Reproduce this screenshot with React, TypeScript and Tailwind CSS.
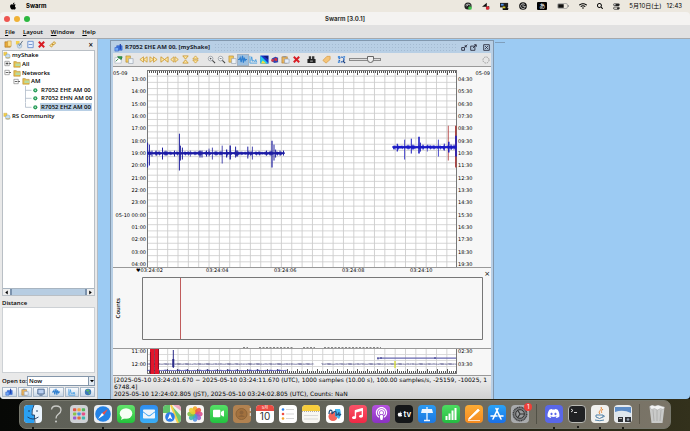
import React, { useState } from 'react';
import { FaApple, FaDiscord, FaPodcast, FaMusic, FaVideo, FaEnvelope, FaWifi, FaSearch } from 'react-icons/fa';

const uiFont = "font-['DejaVu_Sans',sans-serif]";
const swingFont = "font-['Open_Sans',sans-serif] font-semibold";
const macFont = "font-[Inter,'Noto_Sans_CJK_JP',sans-serif]";

const leftHours = ['13:00', '14:00', '15:00', '16:00', '17:00', '18:00', '19:00', '20:00', '21:00', '22:00', '23:00', '05-10 00:00', '01:00', '02:00', '03:00', '04:00'];
const rightHours = ['04:30', '05:30', '06:30', '07:30', '08:30', '09:30', '10:30', '11:30', '12:30', '13:30', '14:30', '15:30', '16:30', '17:30', '18:30', '19:30'];

// [x, top, bottom, width]
type Spike = [number, number, number, number];

const morningSpikes: Spike[] = [
  [0.6, 73, 98, 1], [2.4, 75, 96, 1], [5, 81, 87, 1], [9, 81, 86, 1], [15.5, 78, 90, 1], [27.5, 81, 87, 1],
  [32.4, 64, 101, 1], [33.4, 76, 91, 1], [35.4, 78, 90, 1], [43.4, 81, 87, 0.7], [53, 81, 88, 1], [55, 81, 88, 1],
  [59.5, 81, 87, 1], [62, 79, 87, 0.7], [65.4, 78, 90, 0.8], [75.2, 76, 94, 0.8], [79.6, 80, 88, 1.2],
  [83.2, 76, 90, 1.4], [88.6, 77, 88, 1], [90, 81, 87, 1.5], [100.8, 77, 89, 1], [105.4, 77, 90, 0.8],
  [119.5, 81, 86, 1], [125, 71, 98, 1.2], [127, 75, 91, 1], [128.6, 80, 88, 1], [133, 81, 86, 1], [136.5, 81, 86, 1]
];

const eveningSpikes: Spike[] = [
  [250.3, 74, 82, 1.2], [248, 76, 80, 1], [257.6, 70, 90, 0.8], [264.3, 69, 84, 1], [272, 67, 84, 1.6],
  [273.4, 73, 82, 1], [276, 75, 80, 1], [280.3, 75, 82, 0.7], [291.4, 70, 87, 0.8], [297.3, 74, 81, 1],
  [301.8, 72, 83, 1.5], [304, 75, 80, 1.2], [307, 75, 80, 1], [309, 66, 87, 1.6]
];

const columns = Array.from({ length: 29 }, (_, i) => (i + 1) * 10.34);

// thin jittery base line of a trace
const noise = (from: number, to: number, y: number, amp: number) => {
  let d = `M${from} ${y}`;
  for (let x = from; x <= to; x += 1) {
    const a = (0.4 + Math.abs(Math.sin(x * 2.7) * Math.cos(x * 0.31))) * amp;
    d += `L${x} ${y - a}L${x + 0.5} ${y + a}`;
  }
  return d;
};

function Ticks({ y, up }: { y: number; up?: boolean }) {
  const s = up ? -1 : 1;
  return (
    <>
      {Array.from({ length: 155 }, (_, i) => (
        <path key={i} d={`M${i * 2 + 0.5} ${y}v${(i % 5 === 0 ? 5 : 3) * s}`} stroke="#555" strokeWidth={1} />
      ))}
    </>
  );
}

function Helicorder() {
  return (
    <svg className="block h-full w-full bg-white" viewBox="0 0 310 198" preserveAspectRatio="none">
      {columns.map((x) => <path key={x} d={`M${x} 0V198`} stroke="#c6c6c6" strokeWidth={0.8} />)}
      {Array.from({ length: 32 }, (_, i) => (
        <path key={i} d={`M0 ${6.2 + i * 6.22}H310`} stroke="#cccccc" strokeWidth={0.8} />
      ))}
      <Ticks y={0} />
      <path d="M0 0.5H310M0.5 0V198M309.5 0V198" stroke="#777" fill="none" />
      <path d="M301.3 56V91" stroke="#b94a4a" strokeWidth={0.9} />
      <path d="M308.8 56V98" stroke="#a83232" strokeWidth={1.4} />
      <path d={noise(0, 137, 83.7, 0.8)} stroke="#1a1aa6" strokeWidth={1.1} fill="none" />
      <path d="M0 83.600H137.500" stroke="#1a1aa6" strokeWidth={1.3} />
      <path d={noise(246, 309, 77.6, 0.9)} stroke="#1a1ac8" strokeWidth={1.1} fill="none" />
      <path d="M245.500 77.600H309" stroke="#1a1ac8" strokeWidth={1.3} />
      {morningSpikes.map(([x, a, b, w]) => <path key={x} d={`M${x} ${a}V${b}`} stroke="#2020a0" strokeWidth={w} />)}
      {eveningSpikes.map(([x, a, b, w]) => <path key={x} d={`M${x} ${a}V${b}`} stroke="#1c1cc0" strokeWidth={w} />)}
    </svg>
  );
}

function TailStrip() {
  return (
    <svg className="block h-full w-full bg-white" viewBox="0 0 310 25" preserveAspectRatio="none">
      {columns.map((x) => <path key={x} d={`M${x} 0V25`} stroke="#c9c9c9" strokeWidth={0.8} />)}
      <path d="M0 5.5H310M0 11.5H310M0 17.5H310" stroke="#d2d2d2" strokeWidth={0.8} />
      <Ticks y={25} up />
      <path d="M0 24.5H310M0.5 0V25M309.5 0V25" stroke="#777" />
      <path d={noise(0, 166, 15, 0.4)} stroke="#44447c" strokeWidth={0.7} fill="none" />
      <path d={noise(175, 309, 15, 0.4)} stroke="#44447c" strokeWidth={0.7} fill="none" />
      <path d={noise(0, 139, 21.3, 0.4)} stroke="#3c3caa" strokeWidth={0.8} fill="none" />
      <path d="M230 9.2H309" stroke="#6868b0" strokeWidth={1.2} />
      <path d="M231 8.5v2M234 8v2M288 8v2" stroke="#333388" />
      <path d="M26.3 1V19" stroke="#2a2a88" />
      <path d="M26.3 10V18" stroke="#2a2a88" strokeWidth={2} />
      <path d="M3 0H7V25H3zM8 0H12V25H8z" fill="#e3142a" />
      <path d="M7.5 0V25M3.4 3V25M11.5 0V20" stroke="#701028" strokeWidth={0.8} />
      <path d="M248 12v7" stroke="#d8e020" strokeWidth={1.2} />
    </svg>
  );
}

const glyphs: Record<string, React.ReactNode> = {
  open: <><path d="M1 2h5l1 1v5H1z" fill="#e8a93a" stroke="#a5701c" strokeWidth=".6" /><path d="M4 1h4v6H4z" fill="#ffe08a" stroke="#b8862a" strokeWidth=".5" /></>,
  edit: <><path d="M1 1h4v4H1z" fill="#f3cf4c" /><circle cx="5" cy="6.5" r="2.6" fill="#c5d8ec" stroke="#7d9ab8" strokeWidth=".5" /><path d="M4 5l1 1 3.5-5" stroke="#34495e" strokeWidth=".8" fill="none" /></>,
  collapse: <path d="M2 1.5h6v7H2zM3 5h4" fill="#e7f0ff" stroke="#5b86c9" strokeWidth=".9" />,
  remove: <path d="M2 2l6 6M8 2L2 8" stroke="#d81c24" strokeWidth="2.2" />,
  link: <path d="M2.2 6.2l2-2 1.6 1.6-2 2zM4.8 3.8l2-2 1.6 1.6-2 2z" fill="#fbe6a0" stroke="#c18c22" strokeWidth="1" />,
  pin: <><path d="M1 3h7v6H1z" fill="#fff" stroke="#9aaabc" strokeWidth=".6" /><path d="M2 7l3-3M4 2l4 3 1-3z" stroke="#237a3b" strokeWidth="1" fill="#36a853" /></>,
  clip: <><path d="M1 1h5v7H1z" fill="#f1c75b" stroke="#a9822a" strokeWidth=".6" /><path d="M4 4h5v5.5H4z" fill="#eef3f8" stroke="#8895a5" strokeWidth=".6" /></>,
  back: <path d="M5 2v6L1 5zM9 2v6L5 5z" fill="#ffe9a8" stroke="#c8952b" strokeWidth=".8" />,
  forward: <path d="M1 2v6l4-3zM5 2v6l4-3z" fill="#ffe9a8" stroke="#c8952b" strokeWidth=".8" />,
  narrow: <path d="M1 2v6l4-3zM9 2v6L5 5z" fill="#ffe9a8" stroke="#c8952b" strokeWidth=".9" />,
  widen: <path d="M4.4 2v6L.8 5zM5.6 2v6l3.6-3z" fill="#ffe9a8" stroke="#c8952b" strokeWidth=".8" />,
  squash: <path d="M2 1h6L5 4.6zM2 9h6L5 5.4z" fill="#ffe9a8" stroke="#c8952b" strokeWidth=".9" />,
  stretch: <path d="M2 4.4h6L5 1zM2 5.6h6L5 9z" fill="#ffe9a8" stroke="#c8952b" strokeWidth=".8" />,
  zoomIn: <><circle cx="4" cy="4" r="2.6" fill="#f4f7fa" stroke="#8a8f96" strokeWidth=".8" /><path d="M6 6l3 3" stroke="#444" strokeWidth="1.2" /><path d="M3 4h2M4 3v2" stroke="#333" strokeWidth=".7" /></>,
  zoomOut: <><circle cx="4" cy="4" r="2.6" fill="#f4f7fa" stroke="#8a8f96" strokeWidth=".8" /><path d="M6 6l3 3" stroke="#444" strokeWidth="1.2" /><path d="M3 4h2" stroke="#333" strokeWidth=".7" /></>,
  wave: <path d="M0 5h1.5L2.5 3l1 5L5 1l1 7.500L7 3l1 3 .6-1H10" fill="none" stroke="#2f7fd0" strokeWidth="1.3" />,
  spectra: <path d="M1 1v8h8M2 7l1-5 1 5 1.500-1 1 1.500L7.500 5l1 3" fill="none" stroke="#3897e0" strokeWidth=".9" />,
  spectrogram: <><path d="M.5.5h9v9h-9z" fill="#1733c8" /><path d="M.5.5l9 9h-9z" fill="#25c7e8" /><path d="M3 6l4 3.500H1z" fill="#f4e33b" /><path d="M4 1h5v4z" fill="#101a78" /></>,
  particle: <><path d="M2 4l4-2 3 1v5L5 9 2 7z" fill="#3046b0" /><path d="M5 3l3 1v3l-3-1z" fill="#d8303c" /><circle cx="2.800" cy="6" r="1.500" fill="#d23a48" /></>,
  paste: <><path d="M1 2h6v7H1z" fill="#e9b45e" stroke="#a3712c" strokeWidth=".6" /><path d="M2.500 1h3v1.600h-3z" fill="#8d97a5" /><path d="M4 4.500h5V9H4z" fill="#e8effa" stroke="#7c8fae" strokeWidth=".6" /></>,
  camera: <><path d="M.500 4.500h9v4.500h-9z" fill="#222" /><path d="M2 1.500h2.600v3H2zM5.600 1.500h2.600v3H5.600z" fill="#333" /><path d="M3.500 6h3v1.500h-3z" fill="#999" /></>,
  tag: <path d="M1 6l4.500-4.500L9 1.500v3.500L4.500 9z" fill="#f5c478" stroke="#dba14d" strokeWidth=".9" />,
  gears: <><circle cx="5" cy="5" r="2.700" fill="none" stroke="#2762ba" strokeWidth="1.500" strokeDasharray="2 1" /><path d="M1 1h2.500v2.500H1zM7 1h2v2H7zM1 7h2v2H1z" fill="#4c90da" /><path d="M6.500 6.500l2.500 2.500" stroke="#1d3e78" strokeWidth="1.400" /></>,
  swarm: <><path d="M3 3h6v5H3z" fill="#3b77e0" stroke="#2a55c0" strokeWidth=".6" /><path d="M1 5h4v4H1z" fill="#72aaf8" stroke="#2a55c0" strokeWidth=".6" /><path d="M7 1v6" stroke="#1d3da8" strokeWidth="1.300" /></>,
  monitor: <><path d="M1 1.500h8v6H1z" fill="#b9cff0" stroke="#33507c" strokeWidth="1" /><path d="M3 9h4" stroke="#33507c" /></>,
  globe: <><circle cx="5" cy="5" r="4" fill="#3f78b8" /><path d="M2 3l3-1.500 2 1.500-2 2zM5 6l3-1-1 3z" fill="#57b768" /></>,
  server: <><path d="M1 1.500h4v4H1z" fill="#f3cf4c" stroke="#b9952a" strokeWidth=".4" /><circle cx="6" cy="6.500" r="2.800" fill="#c8dff2" stroke="#6e96bd" strokeWidth=".6" /><path d="M3 8.500h6" stroke="#d3a52d" strokeWidth=".8" /></>,
  folder: <><path d="M1 2h3l1 1h4v6H1z" fill="#e8bf4d" stroke="#a98023" strokeWidth=".6" /><path d="M3 4.500h6v3H3z" fill="#b9dba0" /></>,
  iconify: <path d="M1 5h4v4H1zM9 1L6 4M6 1.500V4h2.500" fill="none" stroke="#223" strokeWidth="1.200" />,
  maximize: <path d="M1 3h6v6H1zM4 6l4.500-4.500M6 1h3v3" fill="none" stroke="#223" strokeWidth="1.200" />,
  close: <path d="M1 1h8v8H1zM3 3l4 4M7 3L3 7" fill="none" stroke="#223" strokeWidth="1.200" />
};

function Glyph({ name, size = 'size-[8px]' }: { name: string; size?: string }) {
  return <svg viewBox="0 0 10 10" className={`block shrink-0 ${size}`}>{glyphs[name]}</svg>;
}

function ToolButton({ name, active }: { name: string; active?: boolean }) {
  return (
    <button aria-label={name} className={`flex h-[10px] w-[10px] items-center justify-center ${active ? 'bg-[#9bbfe0] outline outline-[#a3b2c2]' : ''}`}>
      <Glyph name={name} size="size-[9px]" />
    </button>
  );
}

function MenuBar() {
  return (
    <header className={`flex h-[12px] shrink-0 items-center bg-[#ece8df] text-[6px] leading-[8px] text-black ${macFont}`}>
      <FaApple className="ml-[9px] size-[8px]" />
      <span className="ml-[9px] font-bold">Swarm</span>
      <div className="ml-auto flex items-center gap-[10px]">
        <svg viewBox="0 0 10 10" className="size-[8px]"><circle cx="5" cy="5" r="4.500" fill="#222" /><path d="M2 4q3-3 6 0M3 5l2-1" stroke="#ddd" fill="none" /><circle cx="7.500" cy="7.500" r="2.300" fill="#3fc34c" /></svg>
        <svg viewBox="0 0 10 10" className="size-[8px]"><path d="M0 6l6-5v5l3-1v4H5V6z" fill="#111" /><circle cx="7" cy="7.500" r="2.200" fill="#e02c38" /></svg>
        <svg viewBox="0 0 10 10" className="size-[9px]"><path d="M0 1h9v5H0z" fill="#222" /><path d="M1 2h3v2H1z" fill="#4c8de8" /><path d="M3 9V6l3-2 3 3v2z" fill="#111" /><path d="M3 5h3v2H3z" fill="#d8c930" /></svg>
        <svg viewBox="0 0 10 10" className="size-[8px]"><circle cx="5" cy="5" r="4.800" fill="#111" /><path d="M7.500 3.500A3 3 0 1 0 8 5.500H5.500M5 3v3" stroke="#eee" strokeWidth=".9" fill="none" /></svg>
        <span className="flex h-[8px] w-[10px] items-center justify-center rounded-[1px] bg-black text-[6px] text-white">あ</span>
        <svg viewBox="0 0 12 8" className="h-[8px] w-[12px]"><rect x=".5" y="1.500" width="10" height="5" rx="1.500" fill="none" stroke="#999" strokeWidth=".7" /><path d="M1.200 2.200h5.500v3.600H1.200z" fill="#111" /><path d="M11.400 3v2" stroke="#999" /></svg>
        <FaWifi className="size-[8px]" />
        <FaSearch className="size-[6px]" />
        <svg viewBox="0 0 10 10" className="size-[7px]"><rect x=".5" y=".8" width="9" height="3.600" rx="1.800" fill="#222" /><rect x=".8" y="5.800" width="8.400" height="3.200" rx="1.600" fill="none" stroke="#222" /><circle cx="2.700" cy="2.600" r="1.100" fill="#fff" /><circle cx="7.200" cy="7.400" r="1.500" fill="#222" /></svg>
      </div>
      <span className="ml-[9px] mr-[8px] flex gap-[5px]"><span>5月10日(土)</span><span>12:43</span></span>
    </header>
  );
}

function WindowHead() {
  return (
    <>
      <div className={`relative flex h-[13px] shrink-0 items-center justify-center rounded-t-[4px] bg-[#f4f3f1] ${macFont}`}>
        <div className="absolute left-[4px] flex gap-[4px]">
          <button aria-label="Close" className="size-[6px] rounded-full bg-[#ee5550]" />
          <button aria-label="Minimize" className="size-[6px] rounded-full bg-[#f0b236]" />
          <button aria-label="Zoom" className="size-[6px] rounded-full bg-[#2cb840]" />
        </div>
        <h1 className="text-[6px] font-bold leading-[8px] text-[#333]">Swarm [3.0.1]</h1>
      </div>
      <nav className={`flex h-[14px] shrink-0 items-center gap-[8px] border-b border-[#a5a9ad] bg-[#e1e1e1] px-[5px] text-[6px] leading-[8px] text-black ${swingFont}`}>
        {['File', 'Layout', 'Window', 'Help'].map((m) => (
          <button key={m}><span className="underline">{m[0]}</span>{m.slice(1)}</button>
        ))}
      </nav>
    </>
  );
}

function Branch({ open }: { open?: boolean }) {
  return (
    <svg viewBox="0 0 8 8" className="size-[7px] shrink-0">
      <path d="M1 1.500h5v5H1z" fill="#fff" stroke="#888" strokeWidth=".8" />
      <path d={open ? 'M2 4h3M6 4h2' : 'M2 4h3M3.500 2.500v3M6 4h2'} stroke="#222" strokeWidth=".8" />
    </svg>
  );
}

function Channel({ label, selected }: { label: string; selected?: boolean }) {
  return (
    <li className="flex items-center pl-[22px]">
      <svg viewBox="0 0 16 9" className="h-full w-[15px] shrink-0" preserveAspectRatio="none">
        <path d={selected ? 'M.500 0V4.500H7' : 'M.500 0V9M.500 4.500H7'} stroke="#a8b4c4" strokeWidth=".8" fill="none" />
        <circle cx="11" cy="4.500" r="2.200" fill="#2c9c5c" /><circle cx="11" cy="4.500" r=".8" fill="#bff0cf" />
      </svg>
      <button className={`whitespace-nowrap px-[1px] leading-[8px] ${selected ? 'bg-[#b8cfe5]' : ''}`}>{label}</button>
    </li>
  );
}

function Sidebar() {
  const [openTo, setOpenTo] = useState('Now');
  return (
    <aside className={`flex w-[98px] shrink-0 flex-col border-r border-[#b4bcc4] bg-[#e9e9e9] px-[2px] text-[6px] leading-[8px] text-black ${swingFont}`}>
      <div className="flex h-[11px] items-center gap-[1px] pl-px">
        <ToolButton name="open" /><ToolButton name="edit" /><ToolButton name="collapse" /><ToolButton name="remove" /><ToolButton name="link" />
        <button aria-label="Hide chooser" className="ml-auto mr-[2px] text-[8px]">×</button>
      </div>
      <div className="flex flex-1 flex-col border border-[#b9bfc5] bg-white">
        <ul className="grid h-[69px] grid-rows-8">
          <li className="flex items-center"><Glyph name="server" /><span className="ml-[1px]">myShake</span></li>
          <li className="flex items-center pl-[1px]"><Branch /><Glyph name="folder" size="ml-[2px] size-[8px]" /><span className="ml-[1px]">All</span></li>
          <li className="flex items-center pl-[1px]"><Branch open /><Glyph name="folder" size="ml-[2px] size-[8px]" /><span className="ml-[1px]">Networks</span></li>
          <li className="flex items-center pl-[10px]"><Branch open /><Glyph name="folder" size="ml-[2px] size-[8px]" /><span className="ml-[1px]">AM</span></li>
          <Channel label="R7052 EHE AM 00" />
          <Channel label="R7052 EHN AM 00" />
          <Channel label="R7052 EHZ AM 00" selected />
          <li className="flex items-center"><Glyph name="server" /><span className="ml-[1px]">RS Community</span></li>
        </ul>
        <div className="mt-auto flex h-[7px] items-stretch border-t border-[#a8b4c0] bg-[#eee]">
          <button aria-label="Scroll left" className="w-[7px]"><svg viewBox="0 0 6 6" className="mx-auto size-[5px]"><path d="M4.500.500v5L1.500 3z" /></svg></button>
          <div className="flex-1 border-x-2 border-[#7c93ad] bg-[#b7cde2]" />
          <button aria-label="Scroll right" className="w-[7px]"><svg viewBox="0 0 6 6" className="mx-auto size-[5px]"><path d="M1.500.500v5l3-2.500z" /></svg></button>
        </div>
      </div>
      <h2 className="mt-[3px] h-[8px]">Distance</h2>
      <div className="h-[66px] border border-[#cdd1d5] bg-white" />
      <div className="mt-[3px] flex h-[10px] items-center">
        <label htmlFor="openTo" className="w-[25px] shrink-0 whitespace-nowrap">Open to:</label>
        <div className="relative h-full flex-1">
          <select id="openTo" value={openTo} onChange={(e) => setOpenTo(e.target.value)} className="block h-full w-full appearance-none border border-[#8496aa] bg-white px-[1px] text-[6px] font-semibold leading-[8px]">
            <option>Now</option>
          </select>
          <span className="pointer-events-none absolute inset-y-0 right-0 flex w-[7px] items-center justify-center border border-[#8496aa] bg-[#e4ebf2]">
            <svg viewBox="0 0 6 6" className="size-[4px]"><path d="M0 1.500h6L3 5z" /></svg>
          </span>
        </div>
      </div>
      <div className="mb-[2px] mt-[1px] flex h-[10px] gap-[1px]">
        {['swarm', 'paste', 'monitor', 'wave', 'spectra', 'globe'].map((n) => (
          <button key={n} aria-label={n} className="flex flex-1 items-center justify-center border border-[#a9b8c8] bg-linear-to-b from-[#fafcfe] to-[#c9d8e7]"><Glyph name={n} /></button>
        ))}
      </div>
    </aside>
  );
}

function WaveFrame() {
  const [zoom, setZoom] = useState(75);
  return (
    <section className="flex w-[382px] shrink-0 flex-col border-x-2 border-[#b8cfe5] bg-[#e8e8e8] text-black outline outline-[#8298ae]">
      <div className="flex h-[12px] items-center bg-[#b8cfe5] px-[1px]">
        <Glyph name="swarm" size="size-[9px]" />
        <h2 className="ml-[2px] whitespace-nowrap font-['Open_Sans',sans-serif] text-[6px] font-bold leading-[8px] text-[#1c2530]">R7052 EHE AM 00, [myShake]</h2>
        <div className="ml-[4px] h-[8px] flex-1 bg-[radial-gradient(#a4bbd2_1px,transparent_1px)] bg-[size:3px_3px]" />
        <div className="ml-[3px] flex gap-[2px]">
          <button aria-label="Iconify"><Glyph name="iconify" size="size-[7px]" /></button>
          <button aria-label="Maximize"><Glyph name="maximize" size="size-[7px]" /></button>
          <button aria-label="Close frame" className="ml-[4px]"><Glyph name="close" size="size-[7px]" /></button>
        </div>
      </div>
      <div className="flex h-[13px] items-center bg-[#e6e6e6]">
        <div className="flex gap-[1px]"><ToolButton name="pin" /><ToolButton name="clip" /></div>
        <div className="ml-[4px] flex w-[63px] justify-between">
          <ToolButton name="back" /><ToolButton name="forward" /><ToolButton name="narrow" /><ToolButton name="widen" /><ToolButton name="squash" /><ToolButton name="stretch" />
        </div>
        <div className="ml-[5px] flex w-[95px] justify-between">
          <ToolButton name="zoomIn" /><ToolButton name="zoomOut" /><ToolButton name="clip" /><ToolButton name="wave" active /><ToolButton name="spectra" /><ToolButton name="spectrogram" /><ToolButton name="particle" /><ToolButton name="paste" /><ToolButton name="remove" />
        </div>
        <div className="ml-[5px] flex gap-[5px]"><ToolButton name="camera" /><ToolButton name="tag" /><ToolButton name="gears" /></div>
        <input
          type="range"
          aria-label="Picker scale"
          value={zoom}
          onChange={(e) => setZoom(Number(e.target.value))}
          className="ml-[3px] h-[8px] w-[32px] appearance-none bg-transparent [&::-webkit-slider-runnable-track]:h-[3px] [&::-webkit-slider-runnable-track]:border [&::-webkit-slider-runnable-track]:border-[#8a8a8a] [&::-webkit-slider-runnable-track]:bg-[#ddd] [&::-webkit-slider-thumb]:-mt-[3px] [&::-webkit-slider-thumb]:size-[7px] [&::-webkit-slider-thumb]:appearance-none [&::-webkit-slider-thumb]:rounded-b-full [&::-webkit-slider-thumb]:border [&::-webkit-slider-thumb]:border-[#666] [&::-webkit-slider-thumb]:bg-[#eee]"
        />
        <svg viewBox="0 0 10 10" className="ml-auto mr-[1px] size-[8px]"><circle cx="5" cy="5" r="3.800" fill="none" stroke="#999" strokeWidth="1.200" strokeDasharray="1.800 1.200" /></svg>
      </div>

      <div className="flex min-h-0 flex-1 border-t border-[#999] bg-[#f7f7f7] pt-[3px] text-[5px] leading-[6px]">
        <div className="flex w-[34px] shrink-0 flex-col">
          <span className="h-[6px]">05-09</span>
          <ol className="flex flex-1 flex-col justify-between text-right">
            {leftHours.map((h) => <li key={h} className="whitespace-nowrap pr-[1px]">{h}</li>)}
          </ol>
        </div>
        <div className="relative min-w-0 flex-1"><div className="absolute inset-0"><Helicorder /></div></div>
        <div className="flex w-[34px] shrink-0 flex-col">
          <span className="h-[6px] pr-[1px] text-right">05-09</span>
          <ol className="flex flex-1 flex-col justify-between pl-[1px]">
            {rightHours.map((h) => <li key={h}>{h}</li>)}
          </ol>
        </div>
      </div>

      <div className="flex h-[82px] shrink-0 flex-col border-y border-[#999] bg-[#f7f7f7]">
        <div className="flex h-[9px] text-[5px] leading-[6px]">
          <div className="-mt-px flex flex-1 items-start pl-[23px]">
            {['♥03:24:02', '03:24:04', '03:24:06', '03:24:08', '03:24:10'].map((t) => <span key={t} className="w-[68px] first:w-[70px]">{t}</span>)}
          </div>
          <button aria-label="Close wave" className="mr-[1px] mt-[2px] text-[7px] leading-[6px]">×</button>
        </div>
        <div className="flex h-[63px]">
          <span className="flex w-[29px] items-center pl-[1px] text-[6px] leading-[8px]"><span className={`rotate-180 [writing-mode:vertical-rl] ${swingFont}`}>Counts</span></span>
          <svg className="h-full min-w-0 flex-1" viewBox="0 0 341 63" preserveAspectRatio="none">
            <path d="M.500 .500H340.500V62.500H.500z" fill="#f7f7f7" stroke="#777" />
            <path d="M38.500 1V62" stroke="#c05c5c" />
          </svg>
          <span className="w-[8px]" />
        </div>
        <svg className="ml-[130px] mt-auto block h-[1px] w-[140px]" viewBox="0 0 140 1">
          <path d="M0 .500H5M16 .500H50M60 .500H72M81 .500H138" stroke="#888" strokeDasharray="2 1.500" />
        </svg>
      </div>

      <div className="flex h-[27px] shrink-0 border-b border-[#999] bg-[#f7f7f7] pb-[1px] text-[5px] leading-[6px]">
        <div className="w-[34px] pr-[1px] text-right"><p className="-mt-px h-[13px]">11:00</p><p>12:00</p></div>
        <div className="min-w-0 flex-1"><TailStrip /></div>
        <div className="w-[34px] pl-[1px]"><p className="-mt-px h-[13px]">02:30</p><p>03:30</p></div>
      </div>
      <div className="h-[23px] shrink-0 bg-linear-to-b from-[#efefef] to-[#d0d0d0] pl-[1px] text-[6px] leading-[7px]">
        <p>[2025-05-10 03:24:01.670 − 2025-05-10 03:24:11.670 (UTC), 1000 samples (10.00 s), 100.00 samples/s, -25159, -10025, 1</p>
        <p>6748.4]</p>
        <p>2025-05-10 12:24:02.805 (JST), 2025-05-10 03:24:02.805 (UTC), Counts: NaN</p>
      </div>
    </section>
  );
}

function DockIcon({ label, bg, children, running }: { label: string; bg: string; children?: React.ReactNode; running?: boolean }) {
  return (
    <button aria-label={label} className={`relative flex size-[18px] shrink-0 items-center justify-center rounded-[4px] ${bg}`}>
      {children}
      {running && <span className="absolute -bottom-[6px] left-[8px] size-[2px] rounded-full bg-black" />}
    </button>
  );
}

function Art({ children }: { children: React.ReactNode }) {
  return <svg viewBox="0 0 18 18" className="size-[18px] shrink-0">{children}</svg>;
}

const launchColors = ['#e2574c', '#f2a23a', '#58b85c', '#8bc34a', '#4a90e2', '#e44f87', '#9b59d0', '#e8683c', '#3fb8af'];
const petals = ['#f6a623', '#f0563c', '#d84a8c', '#9a5cc8', '#4f8fe0', '#3fb6a8', '#7cc243', '#e8d02f'];

function Dock() {
  return (
    <footer className="relative h-[32px] shrink-0 bg-linear-to-r from-[#070806] via-[#17160c] to-[#33311c] px-[19px] pt-[1px]">
      <div className="flex h-[29px] items-center justify-between rounded-[7px] border border-[#77786d] bg-linear-to-r from-[#5e6057] via-[#64645a] to-[#7b7568] px-[4px] pb-[2px]">
        <DockIcon label="Finder" bg="bg-[#eaf4fd]" running>
          <Art><path d="M4 0h6Q7 5 8 10h2v8H4q-4 0-4-4V4q0-4 4-4" fill="#2aa0f2" /><path d="M5 5v2M13 5v2M3.500 12q5.500 4 11 0M10 0Q7.500 5 8 10h2.500q0 4 .5 8" stroke="#17375e" fill="none" strokeWidth=".9" /></Art>
        </DockIcon>
        <DockIcon label="Unknown" bg="bg-transparent"><Art><path d="M4.500 4.500Q5 1 9 1q5 0 5 4 0 2.500-3 4.500-2 1.500-2 4" fill="none" stroke="#c9cac6" strokeWidth="1.300" /><circle cx="9" cy="16.500" r="1" fill="#c9cac6" /></Art></DockIcon>
        <DockIcon label="Launchpad" bg="bg-[#cfd2d6]">
          <Art>{launchColors.map((c, i) => <rect key={c} x={3 + (i % 3) * 4.400} y={3.200 + Math.floor(i / 3) * 4.200} width="3.300" height="3" rx=".8" fill={c} />)}</Art>
        </DockIcon>
        <DockIcon label="Safari" bg="bg-[#e9edf1]" running>
          <Art><circle cx="9" cy="9" r="7.800" fill="#2382e6" /><path d="M14 4L8 8l2 2z" fill="#f04f45" /><path d="M4 14l4-6 2 2z" fill="#fff" /></Art>
        </DockIcon>
        <DockIcon label="Messages" bg="bg-linear-to-b from-[#62e36c] to-[#20c33b]">
          <Art><ellipse cx="9" cy="8.500" rx="6.300" ry="5.200" fill="#f6fff6" /><path d="M5 12l-1 3 4-2z" fill="#f6fff6" /></Art>
        </DockIcon>
        <DockIcon label="Mail" bg="bg-linear-to-b from-[#2f8df0] to-[#3aaef5]" running><FaEnvelope className="size-[12px] text-[#eef4fa]" /></DockIcon>
        <DockIcon label="Maps" bg="overflow-hidden bg-[#eef2ea]">
          <Art><path d="M0 0h7v8H0z" fill="#5fc46a" /><path d="M10 0h8v6z" fill="#f1a7bd" /><path d="M8 0l10 11v7h-3z" fill="#6ecb70" /><path d="M8 0l7 18" stroke="#f7d04a" strokeWidth="2" /><circle cx="7" cy="12" r="4.800" fill="#2c7de6" /><path d="M7 8.500l2.500 6L7 13l-2.500 1.500z" fill="#fff" /></Art>
        </DockIcon>
        <DockIcon label="Photos" bg="bg-[#f7f6f3]">
          <Art>{petals.map((c, i) => <ellipse key={c} cx="9" cy="5" rx="2.500" ry="3.700" fill={c} opacity=".88" transform={`rotate(${i * 45} 9 9)`} />)}</Art>
        </DockIcon>
        <DockIcon label="FaceTime" bg="bg-linear-to-b from-[#54e066] to-[#21c240]"><FaVideo className="size-[11px] text-white" /></DockIcon>
        <DockIcon label="Contacts" bg="bg-[#b18250]"><Art><circle cx="8.500" cy="9" r="5.500" fill="#a2713e" stroke="#8b6338" /><circle cx="8.500" cy="7.500" r="2" fill="#8c633a" /><path d="M5 12q3.500-4 7 0" fill="#8c633a" /><path d="M17.300 3v3M17.300 8v3" stroke="#ddd" /></Art></DockIcon>
        <DockIcon label="Calendar" bg="overflow-hidden bg-white">
          <span className={`absolute inset-x-0 top-0 h-[6px] bg-[#e94b42] text-center text-[4px] leading-[6px] text-white ${macFont}`}>5月</span>
          <span className={`mt-[5px] text-[10px] leading-[12px] text-[#333] ${macFont}`}>10</span>
        </DockIcon>
        <DockIcon label="Reminders" bg="bg-white"><Art>{['#2d80ed', '#ee4d43', '#f4a52d'].map((c, i) => <g key={c}><circle cx="4" cy={4.500 + i * 4.500} r="1.300" fill={c} /><path d={`M7 ${4.500 + i * 4.500}h8`} stroke="#c4c4c4" strokeWidth=".7" /></g>)}</Art></DockIcon>
        <DockIcon label="Notes" bg="overflow-hidden bg-[#f8f7f2]"><Art><path d="M0 0h18v6H0z" fill="#f6cc3c" /><path d="M0 6.500h18" stroke="#aaa" strokeDasharray="1 1" /><path d="M2 10.500h14M2 14h14" stroke="#ccc" strokeWidth=".7" /></Art></DockIcon>
        <DockIcon label="Freeform" bg="bg-white"><Art><circle cx="7" cy="11.500" r="4.500" fill="#f2645a" /><path d="M9 4h5q2 6-1 10l-4-3z" fill="#43b8f2" /><path d="M3 9c0-6 4-4 3-1s3-4 4-1-1 4 1 3 2-4 2-1 1 1 2 0" stroke="#22507e" fill="none" strokeWidth="1.200" /></Art></DockIcon>
        <DockIcon label="Music" bg="bg-linear-to-b from-[#fb5268] to-[#ef2845]"><FaMusic className="size-[11px] text-white" /></DockIcon>
        <DockIcon label="Podcasts" bg="bg-linear-to-b from-[#b652e0] to-[#8a32c2]"><FaPodcast className="size-[13px] text-white" /></DockIcon>
        <DockIcon label="TV" bg="bg-[#151719]"><span className={`flex items-center text-[8px] font-semibold leading-[8px] text-white ${macFont}`}><FaApple className="size-[6px]" />tv</span></DockIcon>
        <DockIcon label="Keynote" bg="bg-linear-to-b from-[#2b9af3] to-[#1d78e0]"><Art><path d="M4 4h10l1 4H3z" fill="#eef6ff" /><path d="M9 8v7M6 15.500h6M9 2v2" stroke="#eef6ff" strokeWidth="1.300" /></Art></DockIcon>
        <DockIcon label="Numbers" bg="bg-linear-to-b from-[#4bdc60] to-[#24bb42]"><Art><path d="M4.500 15v-4M7.500 15V8.500M10.500 15V5.500M13.500 15V3" stroke="#fff" strokeWidth="2" /></Art></DockIcon>
        <DockIcon label="Pages" bg="bg-linear-to-b from-[#fbab35] to-[#f48a1f]"><Art><path d="M4 13L13 4l1.500 1.500L5 14l-1.500.5zM3 15.500h12" fill="#fff" stroke="#fff" strokeWidth=".7" /></Art></DockIcon>
        <DockIcon label="App Store" bg="bg-linear-to-b from-[#2ba3f7] to-[#1b6fe6]"><Art><path d="M10 3.500L5 14M8 3.500L13 14M3 11h6M11 11h4" stroke="#fff" strokeWidth="1.600" strokeLinecap="round" /></Art></DockIcon>
        <DockIcon label="System Settings" bg="bg-[#a9abad]">
          <Art><circle cx="9" cy="9" r="6.800" fill="#77797b" stroke="#38393b" strokeWidth="1.300" strokeDasharray="1.200 .500" /><circle cx="9" cy="9" r="4.300" fill="#999b9d" stroke="#333" /><path d="M9 9h4.500M9 9L6.500 5M9 9l-2.500 4" stroke="#333" strokeWidth="1.200" /></Art>
          <span className={`absolute -right-[3px] -top-[2px] size-[8px] rounded-full bg-[#ef4038] text-center text-[6px] leading-[8px] text-white ${macFont}`}>1</span>
        </DockIcon>
        <span className="mx-[2px] h-[20px] w-px bg-[#525146]" />
        <DockIcon label="Discord" bg="bg-[#5967e8]" running><FaDiscord className="size-[13px] text-white" /></DockIcon>
        <DockIcon label="Terminal" bg="border border-[#b9b9b4] bg-[#202123]" running><Art><path d="M3 4l2 1.500L3 7M6 7.500h3" stroke="#eee" fill="none" strokeWidth=".9" /></Art></DockIcon>
        <DockIcon label="Java" bg="bg-[#f1f1ee]" running>
          <Art><path d="M10 2c2 3-4 4-1 7M12 4c-2 2-2 3-1 4" stroke="#e28738" fill="none" strokeWidth="1" /><path d="M5 10h7v2q-3.500 3-7 0zM4 15q5 1.500 9 0M12 10.500q3 0 0 2" stroke="#5483a8" fill="none" /></Art>
        </DockIcon>
        <DockIcon label="Preview" bg="bg-[#e6e9ec]" running><Art><path d="M1 2h16v8H1z" fill="#5d8cc6" /><path d="M1 7q8-3 16 1v4H1z" fill="#dfe7ed" /><path d="M4 12h5v5H4zM11 12h6v5h-6z" fill="#303338" /><path d="M5 13h3v1H5z" fill="#bbb" /><circle cx="14" cy="14.500" r="1.300" fill="#9aa5b2" /></Art></DockIcon>
        <span className="mx-[2px] h-[20px] w-px bg-[#5d584c]" />
        <DockIcon label="Trash" bg="bg-transparent"><Art><path d="M1.500 2h15l-2 16h-11z" fill="#c9cac9" /><path d="M5 5l1 11M9 5v11M13 5l-1 11" stroke="#a9aaa8" strokeWidth=".8" /><path d="M1.500 1.500L4 0l3 1 3-1 3 1 3.500 1-1 2.500-3-1-3 1.500-3-1.500-3 1z" fill="#f2f3f3" stroke="#999" strokeWidth=".4" /></Art></DockIcon>
      </div>
    </footer>
  );
}

export default function App() {
  return (
    <div className={`flex h-screen min-h-[431px] flex-col overflow-hidden bg-[#ece8df] ${uiFont}`}>
      <MenuBar />
      <WindowHead />
      <main className="flex min-h-0 flex-1 bg-[#0b0b07]">
        <div className="flex min-w-0 flex-1 overflow-hidden rounded-b-[4px] bg-[#9ccbf3]">
          <Sidebar />
          <div className="flex min-w-0 flex-1 pl-[13px] pt-[2px]">
            <WaveFrame />
            <span className="ml-[2px] mt-px h-px w-[10px] bg-[#7f9fbd]" />
          </div>
        </div>
      </main>
      <Dock />
    </div>
  );
}
